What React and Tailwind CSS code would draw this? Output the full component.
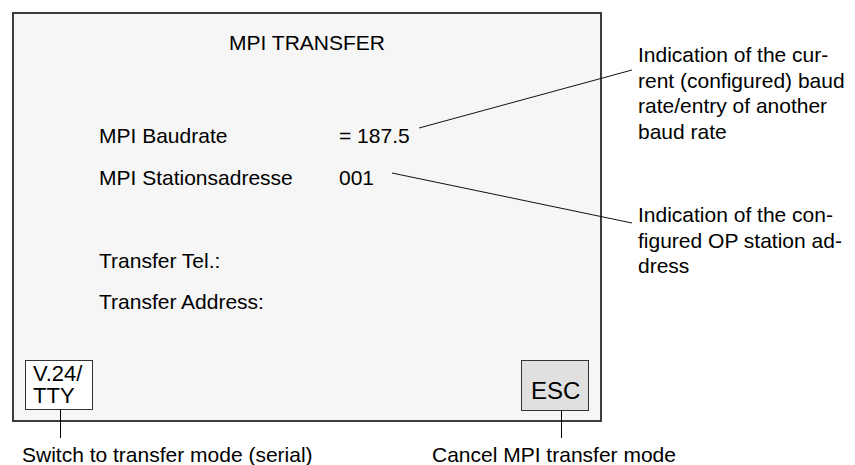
import React from "react";

const rows = [
  { label: "MPI Baudrate", value: "= 187.5" },
  { label: "MPI Stationsadresse", value: "001" },
  { label: "", value: "" },
  { label: "Transfer Tel.:", value: "" },
  { label: "Transfer Address:", value: "" },
];

const Screen = () => (
  <div className="w-[590px] h-[410px] border-2 border-[#3c3c3c] bg-[#f6f6f6] flex flex-col">
    <h1 className="pt-[17px] text-center text-[21px] leading-[24px] font-normal">
      MPI TRANSFER
    </h1>
    <div className="mt-[60px] pl-[85px] grid grid-cols-[240px_auto] text-[21px] leading-[41.5px]">
      {rows.map((row, i) => (
        <React.Fragment key={i}>
          <div className="h-[41.5px]">{row.label}</div>
          <div className="h-[41.5px]">{row.value}</div>
        </React.Fragment>
      ))}
    </div>
    <div className="mt-auto px-[11px] pb-[9px] flex justify-between items-end">
      <div className="relative w-[68px] h-[50px] mb-[1px] border border-[#333] bg-white pt-[2px] pl-[7px] text-[22px] leading-[22px]">
        V.24/
        <br />
        TTY
        <span className="absolute top-full left-[34px] w-px h-[29px] bg-black" />
      </div>
      <div className="relative w-[68px] h-[51px] border border-[#333] bg-[#e0e0e0] pt-[18px] pl-[9px] text-[24px] leading-[24px]">
        ESC
        <span className="absolute top-full left-[39px] w-px h-[28px] bg-black" />
      </div>
    </div>
  </div>
);

export default function App() {
  return (
    <div
      className="relative w-[855px] h-[465px] bg-white text-black overflow-hidden"
      style={{ fontFamily: '"Liberation Sans", Arial, sans-serif' }}
    >
      <div className="pt-[12px] pl-[12px]">
        <div className="flex">
          <Screen />
          <div className="ml-[36px] pt-[30px] text-[21px] leading-[25.5px] whitespace-nowrap">
            <p>
              Indication of the cur-
              <br />
              rent (configured) baud
              <br />
              rate/entry of another
              <br />
              baud rate
            </p>
            <p className="mt-[58px]">
              Indication of the con-
              <br />
              figured OP station ad-
              <br />
              dress
            </p>
          </div>
        </div>
        <div className="mt-[21px] pl-[10px] flex text-[21px] leading-[24px] whitespace-nowrap">
          <span className="w-[410px]">Switch to transfer mode (serial)</span>
          <span>Cancel MPI transfer mode</span>
        </div>
      </div>
      <svg
        className="absolute inset-0 pointer-events-none"
        width="855"
        height="465"
        viewBox="0 0 855 465"
      >
        <line x1="419" y1="128" x2="632" y2="70" stroke="#111" strokeWidth="1" />
        <line x1="392" y1="173" x2="632" y2="223" stroke="#111" strokeWidth="1" />
      </svg>
    </div>
  );
}
